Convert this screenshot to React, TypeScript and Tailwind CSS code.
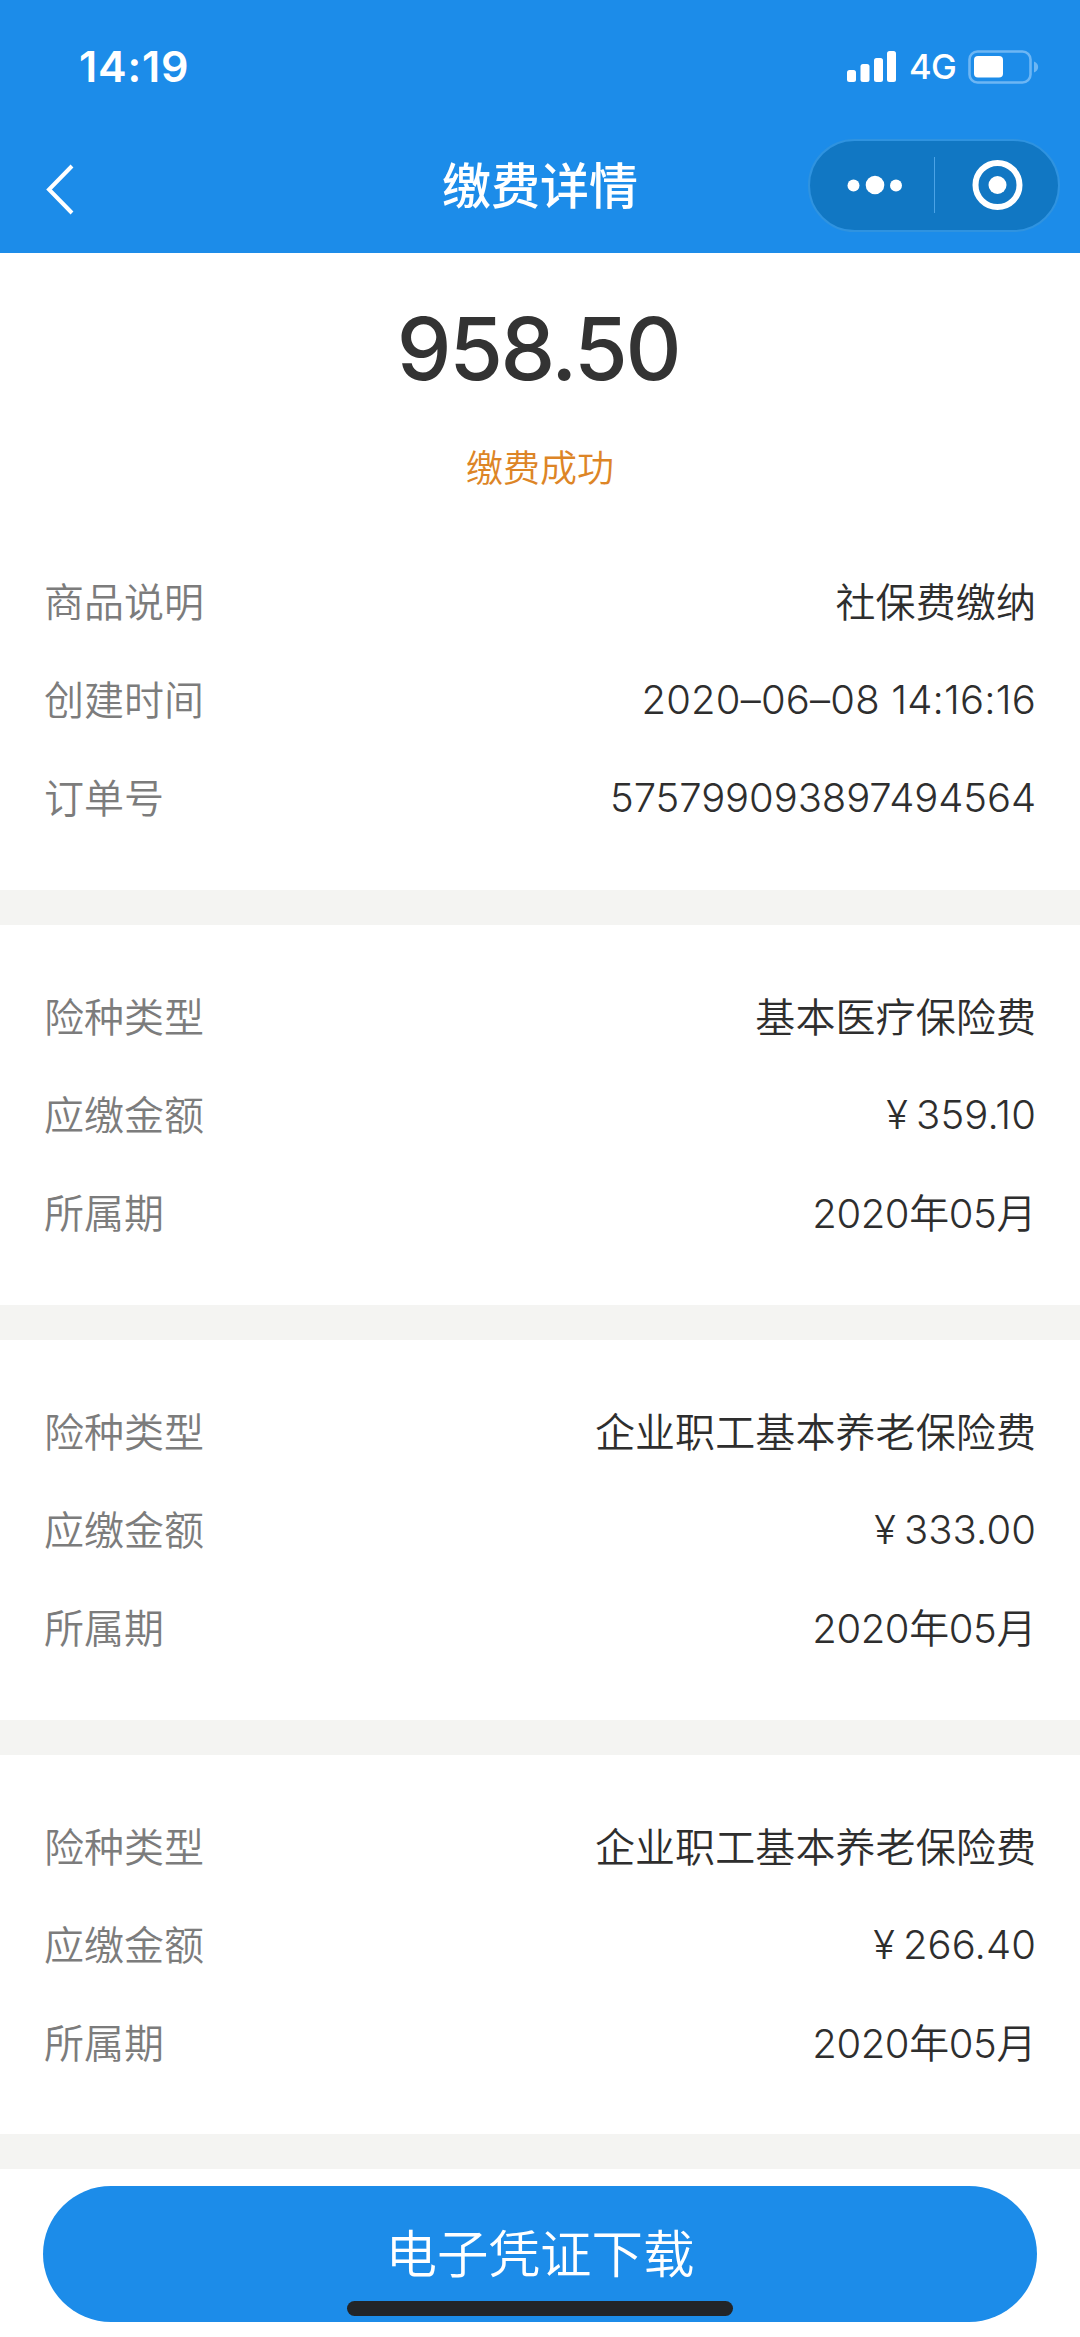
type Row = { label: string; value: string; kind: "text" | "date" | "order" | "money" | "period" };

const order: Row[] = [
  { label: "商品说明", value: "社保费缴纳", kind: "text" },
  { label: "创建时间", value: "2020–06–08 14:16:16", kind: "date" },
  { label: "订单号", value: "575799093897494564", kind: "order" },
];

const insurance = (type: string, amount: string): Row[] => [
  { label: "险种类型", value: type, kind: "text" },
  { label: "应缴金额", value: amount, kind: "money" },
  { label: "所属期", value: "2020年05月", kind: "period" },
];

const sections = [
  insurance("基本医疗保险费", "359.10"),
  insurance("企业职工基本养老保险费", "333.00"),
  insurance("企业职工基本养老保险费", "266.40"),
];

const valueStyle = {
  text: "tracking-[0.1px] font-[350]",
  date: "tracking-[0.2px] font-[360] pb-[2px]",
  order: "tracking-[-0.1px] font-[360] pb-[2px]",
  money: "tracking-[0.1px] font-[360] pb-[2px]",
  period: "tracking-[-0.4px] font-[360] pb-px",
};

function DetailRow({ label, value, kind }: Row) {
  return (
    <div className="flex h-[98px] items-center justify-between text-[40px] leading-none">
      <span className="font-[350] text-[#7c7c7c]">{label}</span>
      <span className={`flex items-center text-[#2e2e2e] ${valueStyle[kind]}`}>
        {kind === "money" && <span className="mr-[8px]">¥</span>}
        <span>{value}</span>
      </span>
    </div>
  );
}

function StatusBar() {
  return (
    <div className="flex h-[134px] items-start justify-between pl-[79px] pr-[40px]">
      <span className="mt-[45px] text-[43px] font-semibold leading-[43px] tracking-[0.8px]">14:19</span>
      <div className="mt-[50px] flex h-[34px] items-center">
        <svg width="50" height="34" viewBox="0 0 50 34" fill="currentColor">
          <rect x="0" y="20" width="9" height="12" rx="2.5" />
          <rect x="13.5" y="14" width="9" height="18" rx="2.5" />
          <rect x="27" y="8" width="9" height="24" rx="2.5" />
          <rect x="40" y="1" width="9" height="31" rx="2.5" />
        </svg>
        <span className="ml-[12px] w-[48px] text-[34.5px] font-[450] leading-[34px] tracking-[-0.6px]">4G</span>
        <svg className="ml-[11px]" width="72" height="34" viewBox="0 0 72 34">
          <rect x="1.5" y="1.5" width="61" height="31" rx="8" fill="none" stroke="#6db6f4" strokeWidth="2.6" />
          <rect x="6" y="6" width="29" height="21.5" rx="4" fill="#fff" />
          <path d="M66 11.500c5.500 2 5.500 9 0 11z" fill="#6db6f4" />
        </svg>
      </div>
    </div>
  );
}

function NavBar() {
  return (
    <div className="grid h-[102px] grid-cols-[1fr_auto_1fr] items-center">
      <svg className="ml-[44px] mt-[8px]" width="34" height="54" viewBox="0 0 34 54" fill="none" stroke="currentColor" strokeWidth="4">
        <path d="M28 4 5 27.500 28 51" />
      </svg>
      <h1 className="mt-[3px] text-[49px] font-medium leading-none">缴费详情</h1>
      <div className="mr-[20px] flex h-[93px] w-[252px] items-center justify-self-end rounded-full border-2 border-[#2f93e0] bg-[#1177c3]">
        <svg className="w-[124px]" height="60" viewBox="0 0 124 60" fill="currentColor">
          <circle cx="43.500" cy="30.500" r="6" />
          <circle cx="65" cy="30" r="9.300" />
          <circle cx="86" cy="30.500" r="6" />
        </svg>
        <div className="h-[56px] w-px bg-[#4ba3e6]" />
        <svg className="w-[123px]" height="60" viewBox="0 0 123 60">
          <circle cx="62.500" cy="30" r="22" fill="none" stroke="currentColor" strokeWidth="6" />
          <circle cx="62.500" cy="30" r="9" fill="currentColor" />
        </svg>
      </div>
    </div>
  );
}

export default function App() {
  return (
    <div className="flex h-[2337px] w-[1080px] flex-col overflow-hidden bg-white font-['Inter','Noto_Sans_CJK_SC',sans-serif]">
      <header className="h-[253px] shrink-0 bg-[#1c8ce9] text-white">
        <StatusBar />
        <NavBar />
      </header>

      <section className="h-[637px] shrink-0 px-[44px]">
        <div className="flex h-[301px] flex-col items-center">
          <p className="mr-[4px] mt-[53px] text-[87px] font-[550] leading-[86px] tracking-[-2.4px] text-[#333]">958.50</p>
          <p className="mt-[58px] text-[37px] font-[350] leading-[37px] text-[#dd8526]">缴费成功</p>
        </div>
        {order.map((r) => (
          <DetailRow key={r.label} {...r} />
        ))}
      </section>

      {sections.map((rows, i) => (
        <section key={i} className="h-[415px] shrink-0 border-t-[35px] border-[#f4f4f2] px-[44px] pt-[44px]">
          {rows.map((r) => (
            <DetailRow key={r.label} {...r} />
          ))}
        </section>
      ))}

      <div className="-mt-px h-[35px] shrink-0 bg-[#f4f4f2]" />
      <footer className="relative px-[43px] pt-[17px]">
        <button className="flex h-[136px] w-full items-center justify-center rounded-full bg-[#1c8ce9] pt-[2px] text-[51.5px] font-[350] leading-none text-white">
          电子凭证下载
        </button>
        <div className="absolute left-[347px] top-[132px] h-[15px] w-[386px] rounded-full bg-[#222528]" />
      </footer>
    </div>
  );
}
